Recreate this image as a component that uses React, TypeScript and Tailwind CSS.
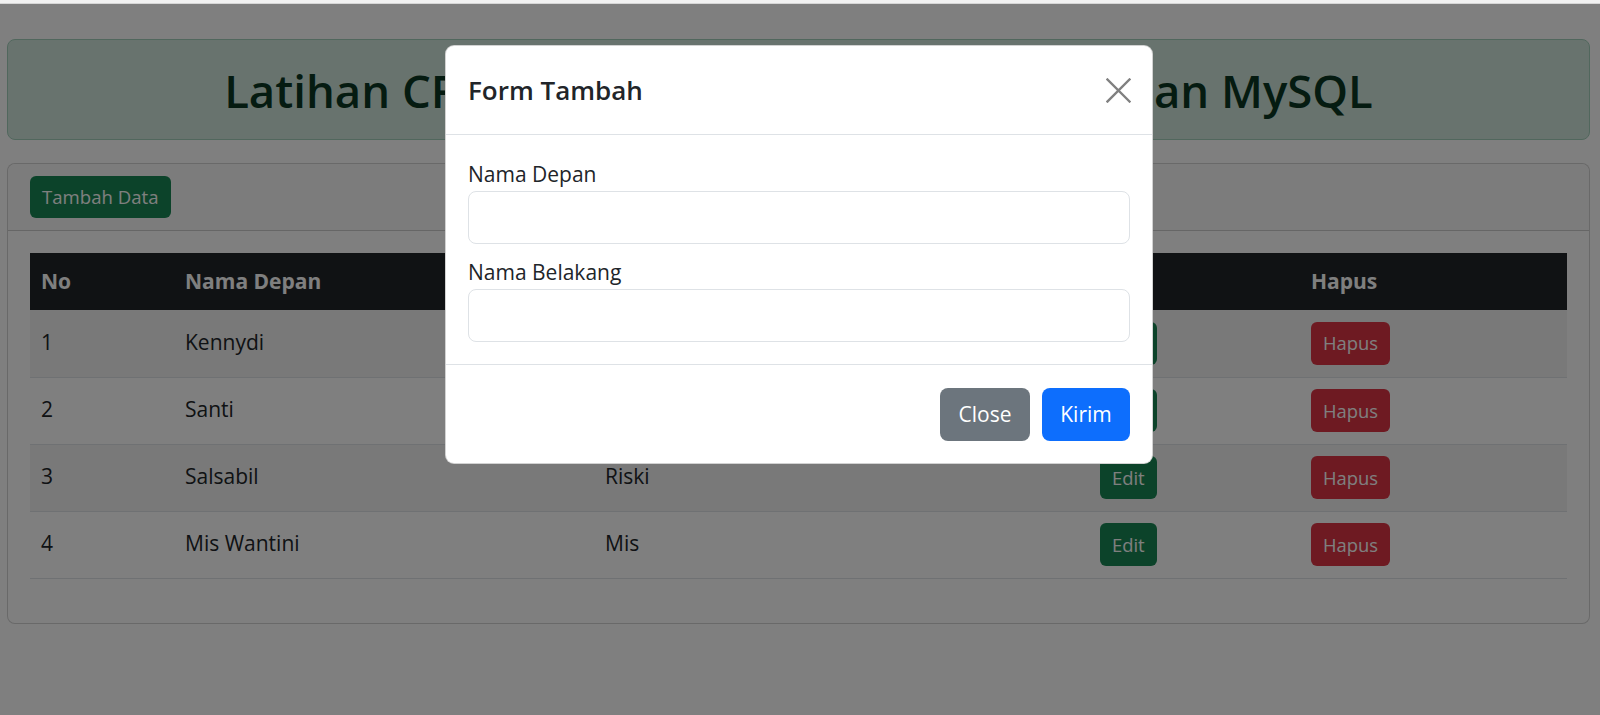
import React from "react"

const ROWS = [
  { no: 1, depan: "Kennydi", belakang: "Wijaya" },
  { no: 2, depan: "Santi", belakang: "Santika" },
  { no: 3, depan: "Salsabil", belakang: "Riski" },
  { no: 4, depan: "Mis Wantini", belakang: "Mis" },
]

function CloseIcon() {
  return (
    <svg width="25" height="25" viewBox="0 0 25 25" fill="none">
      <path d="M1.5 1.5 L23.5 23.5 M23.5 1.5 L1.5 23.5" stroke="#808080" strokeWidth="2.4" strokeLinecap="square" />
    </svg>
  )
}

export default function App() {
  return (
    <div className="flex flex-col h-[715px] overflow-hidden bg-white font-['Open_Sans','Noto_Sans',sans-serif] text-[#212529]">
      {/* browser edge */}
      <div className="h-[4px] bg-[#f1f1f1] border-b border-[#d6d6d6] shrink-0" />

      <div className="relative flex-1">
        {/* Page */}
        <div className="ml-[7px] mr-[10px] pt-[35px]">
          <div className="h-[101px] flex items-center justify-center bg-[#d1e7dd] border border-[#a3cfbb] rounded-[8px]">
            <h1 className="text-[45.5px] font-semibold text-[#0a3622] leading-none pt-[2px]">
              Latihan CRUD Modal Bootstrap Ajax PHP dan MySQL
            </h1>
          </div>

          <div className="mt-[23px] border border-black/[0.175] rounded-[8px] bg-white">
            <div className="px-[22px] py-[12px] bg-[#f8f8f8] border-b border-black/[0.175] rounded-t-[8px]">
              <button className="h-[42px] px-[12px] rounded-[6px] bg-[#198754] text-white text-[18.6px]">
                Tambah Data
              </button>
            </div>
            <div className="p-[22px] pb-[22px]">
              <table className="w-full mb-[22px] border-collapse text-[21px]">
                <thead>
                  <tr className="bg-[#212529] text-white h-[57px]">
                    <th className="w-[144px] px-[11px] text-left font-bold">No</th>
                    <th className="w-[420px] px-[11px] text-left font-bold">Nama Depan</th>
                    <th className="w-[495px] px-[11px] text-left font-bold">Nama Belakang</th>
                    <th className="w-[211px] px-[11px] text-left font-bold">Edit</th>
                    <th className="px-[11px] text-left font-bold">Hapus</th>
                  </tr>
                </thead>
                <tbody>
                  {ROWS.map((r, i) => (
                    <tr key={r.no} className={`h-[67px] border-b border-[#dee2e6] ${i % 2 === 0 ? "bg-[#f2f2f2]" : "bg-white"}`}>
                      <td className="px-[11px] pb-[2px]">{r.no}</td>
                      <td className="px-[11px] pb-[2px]">{r.depan}</td>
                      <td className="px-[11px] pb-[2px]">{r.belakang}</td>
                      <td className="px-[11px]">
                        <button className="h-[43px] px-[12px] rounded-[6px] bg-[#198754] text-white text-[18.4px]">Edit</button>
                      </td>
                      <td className="px-[11px]">
                        <button className="h-[43px] px-[12px] rounded-[6px] bg-[#dc3545] text-white text-[18.4px]">Hapus</button>
                      </td>
                    </tr>
                  ))}
                </tbody>
              </table>
            </div>
          </div>
        </div>

        {/* Backdrop */}
        <div className="absolute inset-0 bg-black/50" />

        {/* Modal */}
        <div className="absolute left-[445px] top-[41px] w-[708px] bg-white rounded-[9px] border border-black/[0.175]">
          <div className="h-[89px] px-[22px] flex items-center justify-between border-b border-[#dee2e6]">
            <h5 className="text-[26px] font-semibold text-[#212529]">Form Tambah</h5>
            <button className="mr-[-1px]">
              <CloseIcon />
            </button>
          </div>
          <div className="px-[22px] pt-[22px] pb-[22px] text-[21px]">
            <label className="block leading-[34px]">Nama Depan</label>
            <input className="block w-full h-[53px] border border-[#dee2e6] rounded-[8px] outline-none" />
            <label className="block leading-[34px] mt-[11px]">Nama Belakang</label>
            <input className="block w-full h-[53px] border border-[#dee2e6] rounded-[8px] outline-none" />
          </div>
          <div className="border-t border-[#dee2e6] px-[22px] pt-[23px] pb-[22px] flex justify-end gap-[12px]">
            <button className="h-[53px] w-[90px] rounded-[8px] bg-[#6c757d] text-white text-[21px]">Close</button>
            <button className="h-[53px] w-[88px] rounded-[8px] bg-[#0d6efd] text-white text-[21px]">Kirim</button>
          </div>
        </div>
      </div>
    </div>
  )
}
